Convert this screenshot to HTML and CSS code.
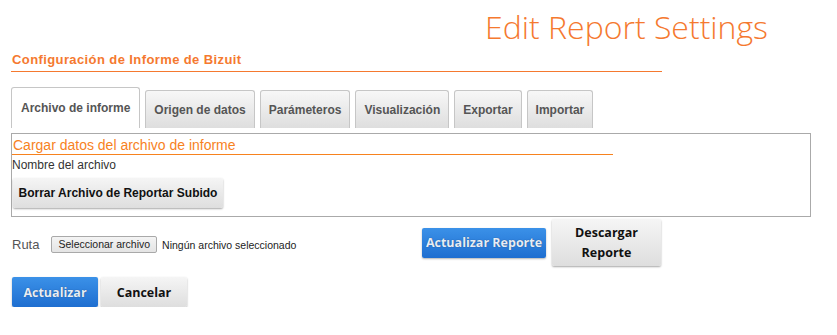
FILE: index.html
```html
<!DOCTYPE html>
<html lang="es">
  <head>
    <meta charset="UTF-8" />
    <meta name="viewport" content="width=device-width, initial-scale=1.0" />
    <title>Edit Report Settings</title>
    <link rel="stylesheet" href="styles.css">
  </head>
  <body>
    <header class="page-header">
      <h1>Edit Report Settings</h1>
    </header>
    <main class="content">
      <h2 class="section-title">Configuración de Informe de Bizuit</h2>

      <ul class="tabs">
        <li class="tab active">Archivo de informe</li>
        <li class="tab">Origen de datos</li>
        <li class="tab">Parámeteros</li>
        <li class="tab">Visualización</li>
        <li class="tab">Exportar</li>
        <li class="tab">Importar</li>
      </ul>

      <div class="panel">
        <h3 class="panel-title">Cargar datos del archivo de informe</h3>
        <div class="file-name">Nombre del archivo</div>
        <button class="btn btn-gray btn-delete">Borrar Archivo de Reportar Subido</button>
      </div>

      <div class="route-row">
        <div class="route">
          <span class="route-label">Ruta</span>
          <span class="file-button">Seleccionar archivo</span>
          <span class="file-status">Ningún archivo seleccionado</span>
        </div>
        <button class="btn btn-blue btn-update-report">Actualizar Reporte</button>
        <button class="btn btn-gray btn-download">Descargar<br />Reporte</button>
      </div>

      <div class="actions">
        <button class="btn btn-blue btn-action">Actualizar</button>
        <button class="btn btn-gray btn-action">Cancelar</button>
      </div>
    </main>
  </body>
</html>
```

FILE: styles.css
```css
body {
  font-family: "Liberation Sans", Arial, sans-serif;
  background-color: #fff;
  color: #333;
  margin: 0;
  padding: 0;
}

.page-header {
  display: flex;
  justify-content: flex-end;
  padding-right: 69px;
  height: 50px;
}

.page-header h1 {
  margin: 0;
  padding-top: 5px;
  font-family: "Open Sans", sans-serif;
  font-weight: 300;
  font-size: 32px;
  line-height: 44px;
  color: #f5792f;
}

.content {
  padding-left: 11px;
}

.section-title {
  width: 650px;
  margin: 0;
  padding: 3px 0 4px 1px;
  font-size: 13px;
  line-height: 14px;
  font-weight: bold;
  letter-spacing: 0.4px;
  color: #f5792f;
  border-bottom: 1px solid #f5792f;
}

.tabs {
  display: flex;
  align-items: flex-end;
  gap: 5px;
  list-style: none;
  margin: 15px 0 0;
  padding: 0;
  height: 41px;
}

.tab {
  box-sizing: border-box;
  height: 38px;
  padding: 0 8px;
  display: flex;
  align-items: center;
  font-size: 12px;
  font-weight: bold;
  color: #555;
  border: 1px solid #c6c6c6;
  border-bottom: none;
  border-radius: 3px 3px 0 0;
  background: linear-gradient(#f7f7f7, #dedede);
}

.tab.active {
  height: 41px;
  padding: 0 9px;
  background: #fff;
}

.panel {
  box-sizing: border-box;
  width: 800px;
  height: 84px;
  margin-top: 5px;
  border: 1px solid #aaa;
}

.panel-title {
  width: 600px;
  margin: 0;
  padding: 3px 0 0 1px;
  font-size: 14px;
  line-height: 17px;
  font-weight: normal;
  color: #f7821e;
  border-bottom: 1px solid #f7821e;
}

.file-name {
  font-size: 12px;
  line-height: 14px;
  padding: 3px 0 0 0;
  color: #333;
}

.btn {
  box-sizing: border-box;
  padding: 0;
  border: none;
  border-radius: 2px;
  white-space: nowrap;
  cursor: pointer;
}

.btn-gray {
  color: #111;
  background: linear-gradient(#f5f5f5, #dedede);
  box-shadow: 0 1px 2px rgba(0, 0, 0, 0.35);
}

.btn-blue {
  color: #e6edf7;
  background: linear-gradient(#3b91e8, #1e6ed0);
  box-shadow: 0 1px 2px rgba(0, 0, 0, 0.3);
  text-shadow: 0 0 1px rgba(0, 0, 0, 0.5);
}

.btn-delete {
  display: block;
  width: 210px;
  height: 30px;
  margin: 6px 0 0 1px;
  font-family: "Liberation Sans", Arial, sans-serif;
  font-size: 12px;
  font-weight: bold;
}

.route-row {
  display: flex;
  align-items: center;
  height: 47px;
  margin-top: 2px;
}

.route {
  width: 410px;
  display: flex;
  align-items: center;
  padding-top: 4px;
  padding-left: 1px;
}

.route-label {
  font-size: 13px;
  color: #555;
  margin-right: 12px;
}

.file-button {
  box-sizing: border-box;
  height: 17px;
  padding: 0 6px;
  font-size: 10.5px;
  line-height: 15px;
  color: #222;
  border: 1px solid #a9a9a9;
  border-radius: 2px;
  background: linear-gradient(#f4f4f4, #e4e4e4);
}

.file-status {
  margin-left: 5px;
  font-size: 10.5px;
  color: #222;
}

.btn-update-report,
.btn-download,
.btn-action {
  font-family: "Open Sans", sans-serif;
  font-size: 12.5px;
  font-weight: bold;
}

.btn-update-report {
  width: 124px;
  height: 30px;
}

.btn-download {
  width: 109px;
  height: 47px;
  margin-left: 6px;
  line-height: 20px;
}

.actions {
  display: flex;
  gap: 3px;
  margin-top: 11px;
  padding-left: 1px;
}

.btn-action {
  width: 86px;
  height: 30px;
}
```
